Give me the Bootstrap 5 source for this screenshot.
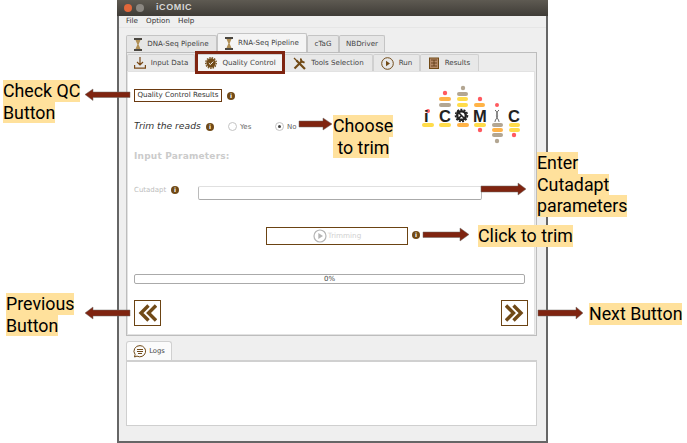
<!DOCTYPE html>
<html><head><meta charset="utf-8">
<link href="https://cdn.jsdelivr.net/npm/bootstrap@5.3.0/dist/css/bootstrap.min.css" rel="stylesheet">
<style>
html,body{margin:0;padding:0;background:#fff;overflow:hidden}
body{width:687px;height:443px;position:relative;font-family:"DejaVu Sans",sans-serif;font-size:7.5px;color:#333}
.appwin{position:absolute;left:117px;top:0;width:431px;height:443px;border:2px solid #666;border-top:0;background:#efefef;display:flex;flex-direction:column}
.titlebar{height:16px;background:linear-gradient(#5e5a52,#3f3c37);display:flex;align-items:center;gap:4px;padding-left:7px;color:#d8d8d8;font-family:"Liberation Sans",sans-serif;font-weight:700;font-size:9px;letter-spacing:.6px;margin:0 -2px}
.tl{width:8px;height:8px;border-radius:50%;background:#8b8781}
.tl.close{background:#e2673a}
.titlebar span.nm{margin-left:8px}
.menubar{height:12px;display:flex;gap:8px;padding-left:7px;align-items:center;color:#333;border-bottom:1px solid #e6e6e6;font-size:7.2px}
.maintabs{display:flex;padding:6px 0 0 7px;height:24px;align-items:flex-end}
.mtab{height:17px;background:#e6e6e6;border:1px solid #c4c4c4;border-bottom:0;border-radius:2px 2px 0 0;display:flex;align-items:center;gap:5px;justify-content:center;font-size:7.1px;color:#444}
.mtab.on{height:19px;background:#f4f4f4}
.pane{margin:0 9px 0 7px;height:284px;border:1px solid #bdbdbd;padding:1px 1px 0 0;background:#ececec;display:flex;flex-direction:column}
.subtabs{display:flex;height:17px;flex:none}
.stab{height:17px;background:#e8e8e8;border:1px solid #d0d0d0;border-bottom:0;border-radius:2px 2px 0 0;display:flex;align-items:center;justify-content:center;gap:5px;font-size:7.1px;color:#444}
.inner{flex:1;background:#fff;border:1px solid #e2e2e2;position:relative}
.qcres{position:absolute;left:6px;top:17px;width:88px;height:13px;border:1px solid #6b3a10;display:flex;align-items:center;justify-content:center;font-size:7.1px;color:#333;background:#fff}
.inf{position:absolute;width:8px;height:8px;border-radius:50%;background:#714a17;color:#fff;font:700 6px/8px "DejaVu Sans",sans-serif;text-align:center}
.trimlab{position:absolute;left:6px;top:48px;font-style:italic;font-size:9.2px;color:#333;line-height:12px}
.radio{position:absolute;width:9px;height:9px;border-radius:50%;border:1px solid #c4c4c4;background:#fff;top:50px}
.radio.sel::after{content:"";position:absolute;left:2px;top:2px;width:3px;height:3px;border-radius:50%;background:#444}
.rlab{position:absolute;top:50px;font-size:7px;color:#666;line-height:10px}
.ipar{position:absolute;left:6px;top:78px;font-weight:700;font-size:9px;color:#cbcbcb;line-height:12px;letter-spacing:.2px}
.cuta{position:absolute;left:6px;top:113px;font-size:7px;color:#bdbdbd;line-height:10px}
.cutin{position:absolute;left:70px;top:114px;width:284px;height:14px;border:1px solid #e0e0e0;border-bottom-color:#aaa;border-right-color:#bbb;border-left-color:#bbb;border-radius:2px;background:#fff}
.trimbtn{position:absolute;left:138px;top:155px;width:142px;height:18px;border:1px solid #6b4313;display:flex;align-items:center;justify-content:center;color:#d0d0d0;font-size:7.2px;gap:1px;background:#fff}
.bar{position:absolute;left:6px;top:202px;width:391px;height:10px;border:1px solid #aaa;border-radius:2px;text-align:center;line-height:8px;font-size:7px;color:#444}
.navb{position:absolute;top:228px;width:27px;height:26px;border:1px solid #6b4313;background:#fff;display:flex;align-items:center;justify-content:center}
.logomark{position:absolute;left:292px;top:13px}
.logs{margin:5px 9px 0 7px;flex:none}
.logtab{width:46px;height:19px;background:#fbfbfb;border:1px solid #d0d0d0;border-bottom:0;border-radius:3px 3px 0 0;display:flex;align-items:center;justify-content:center;gap:2px;font-size:6.8px;color:#444}
.logbody{height:66px;background:#fff;border:1px solid #cfcfcf;border-top:2px solid #d0d0d0}
.note{position:absolute;font-family:Roboto,sans-serif;font-size:17.8px;line-height:21px;color:#000;white-space:nowrap}
.note span{background:#ffe19c;display:inline-block;height:21.5px}
.overlay{position:absolute;left:0;top:0}
.hl{position:absolute;left:195px;top:51px;width:90px;height:23px;border:3px solid #7f2410;pointer-events:none}
</style></head>
<body>
<div class="appwin">
 <div class="titlebar"><i class="tl close"></i><i class="tl"></i><span class="nm">iCOMIC</span></div>
 <div class="menubar"><span>File</span><span>Option</span><span>Help</span></div>
 <div class="maintabs">
  <div class="mtab" style="width:91px"><svg width="8" height="13" viewBox="0 0 8 13"><path d="M1.500 2L3.400 6.500 1.500 11h5L4.600 6.500 6.500 2z" fill="#b08f55"/><path d="M0 0h8v2H0zM0 11h8v2H0z" fill="#4a4640"/></svg>DNA-Seq Pipeline</div>
  <div class="mtab on" style="width:90px"><svg width="8" height="13" viewBox="0 0 8 13"><path d="M1.500 2L3.400 6.500 1.500 11h5L4.600 6.500 6.500 2z" fill="#b08f55"/><path d="M0 0h8v2H0zM0 11h8v2H0z" fill="#4a4640"/></svg>RNA-Seq Pipeline</div>
  <div class="mtab" style="width:32px">cTaG</div>
  <div class="mtab" style="width:46px">NBDriver</div>
 </div>
 <div class="pane">
  <div class="subtabs">
   <div class="stab" style="width:68px"><svg width="12" height="12" viewBox="0 0 12 12" fill="none" stroke="#7a4a18" stroke-width="1.200"><path d="M6 0v8M3 5l3 3 3-3M.6 8v3.200h10.800V8"/></svg>Input Data</div>
   <div class="stab" style="width:89px;background:#f4f4f4;padding-left:2px"><svg width="12" height="12" viewBox="0 0 12 12"><circle cx="6" cy="6" r="4.700" fill="#714a17"/><circle cx="6" cy="6" r="5.300" fill="none" stroke="#714a17" stroke-width="1.300" stroke-dasharray="1.500 1"/><path d="M3.800 6.100l1.600 1.500 2.800-3" stroke="#fff" fill="none"/></svg>Quality Control</div>
   <div class="stab" style="width:89px"><svg width="13" height="13" viewBox="0 0 13 13" fill="none" stroke="#714a17"><path d="M3.500 3.500L12 12" stroke-width="2.200"/><path d="M1 1l3 3" stroke-width="1.200"/><path d="M1.500 11.500L9 4" stroke-width="2.200"/><path d="M8 1.500a2.800 2.800 0 0 0 3.500 3.500" stroke-width="2"/></svg>Tools Selection</div>
   <div class="stab" style="width:47px"><svg width="13" height="13" viewBox="0 0 13 13"><circle cx="6.500" cy="6.500" r="5.800" fill="none" stroke="#714a17"/><path d="M5 3.800v5.400l4-2.700z" fill="#714a17"/></svg>Run</div>
   <div class="stab" style="width:59px;gap:6px"><svg width="10" height="12" viewBox="0 0 10 12"><rect x=".5" y="1" width="9" height="10.500" fill="#b58a68" stroke="#714a17"/><path d="M2 3h6M2 6h6M2 9h6M5 3v6" stroke="#5a3510" stroke-width=".8"/></svg>Results</div>
  </div>
  <div class="inner">
   <div class="qcres">Quality Control Results</div>
   <div class="inf" style="left:99px;top:20px">i</div>
   <div class="trimlab">Trim the reads</div>
   <div class="inf" style="left:78px;top:51px">i</div>
   <div class="radio" style="left:100px"></div><div class="rlab" style="left:112px">Yes</div>
   <div class="radio sel" style="left:147px"></div><div class="rlab" style="left:159px">No</div>
   <div class="ipar">Input Parameters:</div>
   <div class="cuta">Cutadapt</div>
   <div class="inf" style="left:43px;top:114px">i</div>
   <div class="cutin"></div>
   <div class="trimbtn"><svg width="14" height="14" viewBox="0 0 14 14"><circle cx="7" cy="7" r="6" fill="none" stroke="#b5b5b5" stroke-width="1.200"/><path d="M5.300 4v6l4.700-3z" fill="#b5b5b5"/></svg>Trimming</div>
   <div class="inf" style="left:284px;top:159px">i</div>
   <div class="bar">0%</div>
   <div class="navb" style="left:6px"><svg width="19" height="18" viewBox="0 0 19 18" fill="none" stroke="#714a17" stroke-width="3.400"><path d="M10.500 1.500L3 9l7.500 7.500M18 1.500L10.500 9l7.500 7.500"/></svg></div>
   <div class="navb" style="left:373px"><svg width="19" height="18" viewBox="0 0 19 18" fill="none" stroke="#714a17" stroke-width="3.400"><path d="M1 1.500L8.500 9 1 16.500M8.500 1.500L16 9l-7.500 7.500"/></svg></div>
   <svg class="logomark" width="105" height="60" viewBox="420 85 105 60">
    <g fill="#ff5a5f"><circle cx="428" cy="111" r="2"/><circle cx="445" cy="93" r="2.200"/><circle cx="480" cy="99" r="2.200"/><circle cx="480" cy="130" r="2.200"/><circle cx="497" cy="105" r="2"/><circle cx="514" cy="135" r="2.200"/></g>
    <g fill="#ffdc4a"><rect x="422" y="123" width="12" height="4" rx="2"/><rect x="439" y="123" width="12" height="4" rx="2"/><rect x="457" y="97" width="11" height="4" rx="2"/><rect x="457" y="103" width="11" height="4" rx="2"/><rect x="474" y="123" width="12" height="4" rx="2"/><rect x="509" y="123" width="11" height="4" rx="2"/><rect x="509" y="128" width="11" height="4" rx="2"/></g>
    <g fill="#ffb347"><rect x="439" y="97" width="12" height="4" rx="2"/><rect x="457" y="123" width="12" height="4" rx="2"/><rect x="474" y="103" width="11" height="4" rx="2"/><rect x="492" y="128" width="11" height="4" rx="2"/></g>
    <g fill="#b3a692"><circle cx="463" cy="88" r="2.200"/><rect x="457" y="92" width="11" height="4" rx="2"/><rect x="439" y="103" width="12" height="4" rx="2"/><rect x="492" y="123" width="11" height="4" rx="2"/><rect x="492" y="133" width="11" height="4" rx="2"/><circle cx="497" cy="141" r="2.200"/></g>
    <g font-family="Liberation Sans,sans-serif" font-weight="700" fill="#222" font-size="16.500"><text x="424" y="122">i</text><text x="439" y="122">C</text><text x="473" y="122">M</text><text x="508" y="122">C</text></g>
    <circle cx="461.500" cy="115.500" r="4.300" fill="none" stroke="#222" stroke-width="2.400"/><circle cx="461.500" cy="115.500" r="6" fill="none" stroke="#222" stroke-width="1.500" stroke-dasharray="2 1.300"/><path d="M457 111l9 9M457 120l4-4" stroke="#222" stroke-width="1.600"/>
    <path d="M495 110c4 3 0 5.500 2 6s-2 3-2 6M499 110c-4 3 0 5.500-2 6s2 3 2 6" fill="none" stroke="#666"/>
   </svg>
  </div>
 </div>
 <div class="logs"><div class="logtab"><svg width="14" height="13" viewBox="0 0 14 13" fill="none" stroke="#714a17"><path d="M7 .6a5.800 5.600 0 1 1-3 10.500L1.500 12l.6-2.500A5.800 5.600 0 0 1 7 .6z"/><path d="M4 4.500h6M4 6.500h6M5 8.500h4"/></svg>Logs</div><div class="logbody"></div></div>
</div>
<div class="hl"></div>

<div class="note" style="left:3px;top:80px"><span>Check QC</span><br><span>Button</span></div>
<div class="note" style="left:333px;top:115px"><span>Choose</span><br><span>&nbsp;to trim</span></div>
<div class="note" style="left:537px;top:152px"><span>Enter</span><br><span>Cutadapt</span><br><span>parameters</span></div>
<div class="note" style="left:478px;top:225px"><span>Click to trim</span></div>
<div class="note" style="left:6px;top:293px"><span>Previous</span><br><span>Button</span></div>
<div class="note" style="left:589px;top:303px"><span>Next Button</span></div>

<svg class="overlay" width="687" height="443" viewBox="0 0 687 443">
 <g fill="#7f2410" stroke="#6f6a66" stroke-width=".5">
  <path d="M85 94.500l8-5.500v3h37v5.500H93v3z"/>
  <path d="M299 121h24v-3l9 6-9 6v-3h-24z"/>
  <path d="M481 186h37v-3l8 6-8 6v-3h-37z"/>
  <path d="M423 232h37v-4l9 6.500-9 6.500v-3.500h-37z"/>
  <path d="M85 313l8-6v3h37v6H93v3z"/>
  <path d="M538 310h38v-3l7 6-7 6v-3h-38z"/>
 </g>
</svg>
</body></html>
